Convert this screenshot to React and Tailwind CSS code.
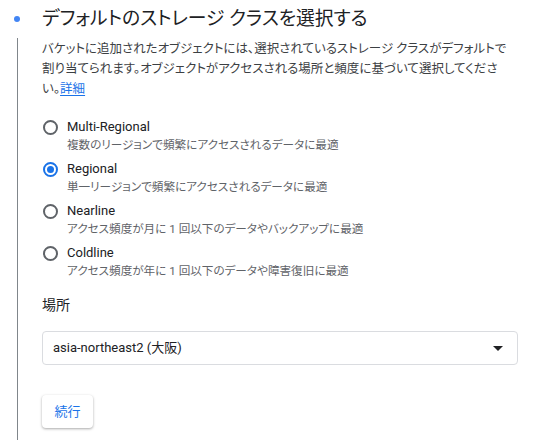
import React from "react";

const font = "font-['Roboto','Noto_Sans_CJK_JP',sans-serif] [font-feature-settings:'palt']";

function Radio({ checked, label, sub }) {
  return (
    <div className="flex">
      <div className="w-[25px] pt-[2.5px] pl-[0.5px] shrink-0">
        {checked ? (
          <div className="w-[15px] h-[15px] rounded-full border-2 border-[#1a73e8] flex items-center justify-center">
            <div className="w-[7px] h-[7px] rounded-full bg-[#1a73e8]" />
          </div>
        ) : (
          <div className="w-[15px] h-[15px] rounded-full border-2 border-[#5f6368]" />
        )}
      </div>
      <div className="flex flex-col">
        <div className="text-[13px] leading-[20px] text-[#202124]">{label}</div>
        <div className="text-[11.6px] leading-[16px] text-[#5f6368]">{sub}</div>
      </div>
    </div>
  );
}

export default function App() {
  return (
    <div className={`w-[534px] h-[440px] bg-white overflow-hidden ${font}`}>
      <div className="flex items-center h-[38px]">
        <div className="w-[42px] flex justify-center pr-[1px] shrink-0">
          <div className="w-[6px] h-[6px] rounded-full bg-[#4285f4] ml-[-7px]" />
        </div>
        <div className="text-[18.8px] leading-[28px] text-[#202124] whitespace-nowrap">
          デフォルトのストレージ クラスを選択する
        </div>
      </div>
      <div className="ml-[17px] border-l border-[#80868b] pl-[24px] pr-[22px] pt-[1px] h-[402px]">
        <p className="text-[12.5px] leading-[20px] text-[#3c4043]">
          バケットに追加されたオブジェクトには、選択されているストレージ クラスがデフォルトで割り当てられます。オブジェクトがアクセスされる場所と頻度に基づいて選択してください。
          <span className="text-[#1a73e8] underline underline-offset-2">詳細</span>
        </p>
        <div className="mt-[18px] flex flex-col gap-[6px]">
          <Radio label="Multi-Regional" sub="複数のリージョンで頻繁にアクセスされるデータに最適" />
          <Radio checked label="Regional" sub="単一リージョンで頻繁にアクセスされるデータに最適" />
          <Radio label="Nearline" sub="アクセス頻度が月に 1 回以下のデータやバックアップに最適" />
          <Radio label="Coldline" sub="アクセス頻度が年に 1 回以下のデータや障害復旧に最適" />
        </div>
        <div className="mt-[14px] text-[14px] leading-[24px] text-[#202124]">場所</div>
        <div className="mt-[14px] w-[476px] h-[34px] border border-[#dadce0] rounded-[4px] flex items-center justify-between pl-[10px] pr-[14px]">
          <span className="text-[13px] text-[#202124]">asia-northeast2 (大阪)</span>
          <svg width="10" height="5" viewBox="0 0 10 5"><path d="M0 0 L10 0 L5 5 Z" fill="#202124" /></svg>
        </div>
        <button className="mt-[30px] w-[51px] h-[33px] rounded-[4px] bg-white text-[13px] text-[#1a73e8] shadow-[0_1px_3px_rgba(0,0,0,0.25),0_1px_2px_rgba(0,0,0,0.1)]">
          続行
        </button>
      </div>
    </div>
  );
}
